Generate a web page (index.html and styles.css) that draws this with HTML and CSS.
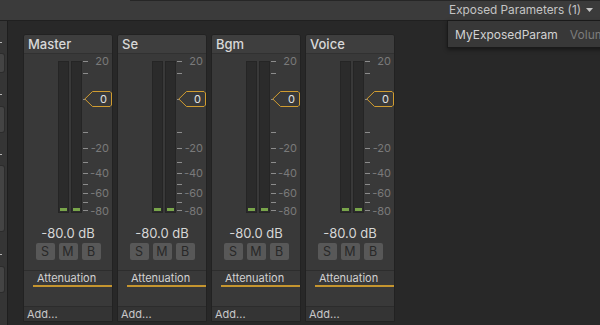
FILE: index.html
```html
<!DOCTYPE html>
<html>
<head>
    <meta charset="utf-8">
    <title>Audio Mixer</title>
    <link rel="stylesheet" href="styles.css">
</head>
<body>
<div class="toolbar">
    <div class="exposed">Exposed Parameters (1)
        <svg width="7" height="4" viewBox="0 0 7 4"><polygon points="0,0 7,0 3.5,4" fill="#c4c4c4"/></svg>
    </div>
</div>
<div class="exposed_menu">
    <span class="param_name">MyExposedParam</span><span class="param_type">Volume</span>
</div>

<div class="workspace">
    <div class="side">
        <i class="stub_dot"></i><i class="stub_box s20"></i>
        <i class="stub_dot d21"></i><i class="stub_box s27"></i>
        <i class="stub_dot d21"></i><i class="stub_box s67"></i>
        <i class="stub_dot d22"></i><i class="stub_box s27"></i>
    </div>

    <div class="mixer">
        <!-- Master -->
        <div class="strip">
            <div class="strip_head">Master</div>
            <div class="meter_box">
                <div class="bars"><div class="bar"><i></i></div><div class="bar"><i></i></div></div>
                <div class="scale">
                    <b class="tick" style="top:0"></b><b class="tick" style="top:12px"></b>
                    <b class="tick" style="top:38px"></b><b class="tick" style="top:71px"></b>
                    <b class="tick" style="top:87px"></b><b class="tick" style="top:101px"></b>
                    <b class="tick" style="top:112px"></b><b class="tick" style="top:123px"></b>
                    <b class="tick" style="top:132px"></b><b class="tick" style="top:141px"></b>
                    <b class="tick" style="top:149px"></b>
                    <span class="mark" style="top:0">20</span>
                    <span class="mark" style="top:87px">-20</span>
                    <span class="mark" style="top:112px">-40</span>
                    <span class="mark" style="top:132px">-60</span>
                    <span class="mark" style="top:150px">-80</span>
                    <div class="fader">
                        <svg width="28" height="16" viewBox="0 0 28 16"><polygon points="0.8,8 8.5,0.5 26,0.5 27.5,2 27.5,14 26,15.5 8.5,15.5" fill="#393939" stroke="#d09c30"/></svg>
                        <em>0</em>
                    </div>
                </div>
            </div>
            <div class="db">-80.0 dB</div>
            <div class="smb"><span>S</span><span>M</span><span>B</span></div>
            <div class="sends"><div class="send">Attenuation</div></div>
            <div class="add">Add...</div>
        </div>

        <!-- Se -->
        <div class="strip">
            <div class="strip_head">Se</div>
            <div class="meter_box">
                <div class="bars"><div class="bar"><i></i></div><div class="bar"><i></i></div></div>
                <div class="scale">
                    <b class="tick" style="top:0"></b><b class="tick" style="top:12px"></b>
                    <b class="tick" style="top:38px"></b><b class="tick" style="top:71px"></b>
                    <b class="tick" style="top:87px"></b><b class="tick" style="top:101px"></b>
                    <b class="tick" style="top:112px"></b><b class="tick" style="top:123px"></b>
                    <b class="tick" style="top:132px"></b><b class="tick" style="top:141px"></b>
                    <b class="tick" style="top:149px"></b>
                    <span class="mark" style="top:0">20</span>
                    <span class="mark" style="top:87px">-20</span>
                    <span class="mark" style="top:112px">-40</span>
                    <span class="mark" style="top:132px">-60</span>
                    <span class="mark" style="top:150px">-80</span>
                    <div class="fader">
                        <svg width="28" height="16" viewBox="0 0 28 16"><polygon points="0.8,8 8.5,0.5 26,0.5 27.5,2 27.5,14 26,15.5 8.5,15.5" fill="#393939" stroke="#d09c30"/></svg>
                        <em>0</em>
                    </div>
                </div>
            </div>
            <div class="db">-80.0 dB</div>
            <div class="smb"><span>S</span><span>M</span><span>B</span></div>
            <div class="sends"><div class="send">Attenuation</div></div>
            <div class="add">Add...</div>
        </div>

        <!-- Bgm -->
        <div class="strip">
            <div class="strip_head">Bgm</div>
            <div class="meter_box">
                <div class="bars"><div class="bar"><i></i></div><div class="bar"><i></i></div></div>
                <div class="scale">
                    <b class="tick" style="top:0"></b><b class="tick" style="top:12px"></b>
                    <b class="tick" style="top:38px"></b><b class="tick" style="top:71px"></b>
                    <b class="tick" style="top:87px"></b><b class="tick" style="top:101px"></b>
                    <b class="tick" style="top:112px"></b><b class="tick" style="top:123px"></b>
                    <b class="tick" style="top:132px"></b><b class="tick" style="top:141px"></b>
                    <b class="tick" style="top:149px"></b>
                    <span class="mark" style="top:0">20</span>
                    <span class="mark" style="top:87px">-20</span>
                    <span class="mark" style="top:112px">-40</span>
                    <span class="mark" style="top:132px">-60</span>
                    <span class="mark" style="top:150px">-80</span>
                    <div class="fader">
                        <svg width="28" height="16" viewBox="0 0 28 16"><polygon points="0.8,8 8.5,0.5 26,0.5 27.5,2 27.5,14 26,15.5 8.5,15.5" fill="#393939" stroke="#d09c30"/></svg>
                        <em>0</em>
                    </div>
                </div>
            </div>
            <div class="db">-80.0 dB</div>
            <div class="smb"><span>S</span><span>M</span><span>B</span></div>
            <div class="sends"><div class="send">Attenuation</div></div>
            <div class="add">Add...</div>
        </div>

        <!-- Voice -->
        <div class="strip">
            <div class="strip_head">Voice</div>
            <div class="meter_box">
                <div class="bars"><div class="bar"><i></i></div><div class="bar"><i></i></div></div>
                <div class="scale">
                    <b class="tick" style="top:0"></b><b class="tick" style="top:12px"></b>
                    <b class="tick" style="top:38px"></b><b class="tick" style="top:71px"></b>
                    <b class="tick" style="top:87px"></b><b class="tick" style="top:101px"></b>
                    <b class="tick" style="top:112px"></b><b class="tick" style="top:123px"></b>
                    <b class="tick" style="top:132px"></b><b class="tick" style="top:141px"></b>
                    <b class="tick" style="top:149px"></b>
                    <span class="mark" style="top:0">20</span>
                    <span class="mark" style="top:87px">-20</span>
                    <span class="mark" style="top:112px">-40</span>
                    <span class="mark" style="top:132px">-60</span>
                    <span class="mark" style="top:150px">-80</span>
                    <div class="fader">
                        <svg width="28" height="16" viewBox="0 0 28 16"><polygon points="0.8,8 8.5,0.5 26,0.5 27.5,2 27.5,14 26,15.5 8.5,15.5" fill="#393939" stroke="#d09c30"/></svg>
                        <em>0</em>
                    </div>
                </div>
            </div>
            <div class="db">-80.0 dB</div>
            <div class="smb"><span>S</span><span>M</span><span>B</span></div>
            <div class="sends"><div class="send">Attenuation</div></div>
            <div class="add">Add...</div>
        </div>
    </div>
</div>
</body>
</html>
```

FILE: styles.css
```css
html,body,div,span{margin:0;padding:0;}
*{box-sizing:border-box;}
body{
    width:600px; height:325px; overflow:hidden; position:relative;
    background:#282828;
    font-family:Inter,"Noto Sans",sans-serif;
}

/* top toolbar */
.toolbar{
    height:21px; border-bottom:1px solid #202020;
    background:linear-gradient(#262626,#262626) 130px 0/100% 1px no-repeat, #3b3b3b;
    display:flex; justify-content:flex-end;
}
.exposed{
    height:20px; display:flex; align-items:center; gap:5px;
    padding:0 7px 0 5px;
    font-size:11.8px; color:#c4c4c4;
}
.exposed_menu{
    position:absolute; left:447px; top:20px; width:170px; height:28px;
    background:#383838; border:1px solid #1a1a1a;
    box-shadow:0 2px 4px rgba(0,0,0,.4);
    display:flex; align-items:center; padding-left:7px;
    font-size:12px; color:#d2d2d2; white-space:nowrap;
}
.param_type{margin-left:12px; color:#7c7c7c;}

/* main area */
.workspace{display:flex; height:304px;}
.side{
    width:8px; flex:none;
    background:#353535; border-right:1px solid #1e1e1e;
    display:flex; flex-direction:column; align-items:flex-start;
    padding-top:21px;
}
.stub_dot{display:block; width:2px; height:1px; background:#b5b5b5;}
.stub_dot.d21{margin-top:21px;}
.stub_dot.d22{margin-top:22px;}
.stub_box{
    display:block; width:5px; margin-top:10px;
    background:#444; border:1px solid #2c2c2c; border-left:none;
    border-radius:0 3px 3px 0;
}
.stub_box.s20{height:20px;}
.stub_box.s27{height:27px; margin-top:11px;}
.stub_box.s67{height:67px;}

.mixer{
    flex:1; display:flex; align-items:flex-start; gap:4px;
    padding:13px 0 0 15px;
}

/* one channel strip */
.strip{
    width:90px; height:288px; flex:none;
    background:#393939; border:1px solid #222;
    border-radius:3px 3px 0 0;
    display:flex; flex-direction:column;
}
.strip_head{
    height:19px; padding-left:4px;
    background:#3e3e3e; border-bottom:1px solid #313131;
    border-radius:2px 2px 0 0;
    font-size:13px; font-weight:500; line-height:18px; color:#d8d8d8;
}
.meter_box{height:170px; display:flex; padding:7px 0 0 34px;}
.bars{display:flex; gap:2px;}
.bar{
    width:11px; height:152px;
    background:#2b2b2b; border:1px solid #252525;
    display:flex; flex-direction:column; justify-content:flex-end;
    padding:0 1px 1px;
}
.bar i{display:block; height:3px; background:#78a44a;}

/* dB scale next to the meters */
.scale{position:relative; width:29px; height:152px;}
.tick{position:absolute; left:1px; width:5px; height:1px; background:#8c8c8c;}
.mark{
    position:absolute; right:2px;
    font-size:11px; line-height:12px; color:#7a7a7a;
    transform:translateY(-50%);
}
.fader{position:absolute; left:2px; top:30px; width:28px; height:16px;}
.fader svg{display:block;}
.fader em{
    position:absolute; right:5px; top:0;
    font-style:normal; font-size:11px; line-height:16px; color:#e2e2e2;
}

.db{height:18px; line-height:18px; text-align:center; font-size:13px; color:#d6d6d6;}
.smb{display:flex; justify-content:center; gap:4px; margin-top:1px;}
.smb span{
    width:19px; height:17px; border-radius:2px;
    background:#585858; color:#282828;
    font-size:12.5px; line-height:17px; text-align:center;
}

.sends{height:36px; margin-top:10px; border-top:1px solid #2d2d2d; padding-left:9px;}
.send{
    height:16px; padding-left:4px;
    border-bottom:2px solid #c5952f;
    font-size:11px; line-height:15px; color:#d2d2d2;
}
.add{
    flex:1; padding-left:3px;
    background:#343434; border-top:1px solid #2c2c2c;
    font-size:11px; line-height:14px; color:#c8c8c8;
}
```
